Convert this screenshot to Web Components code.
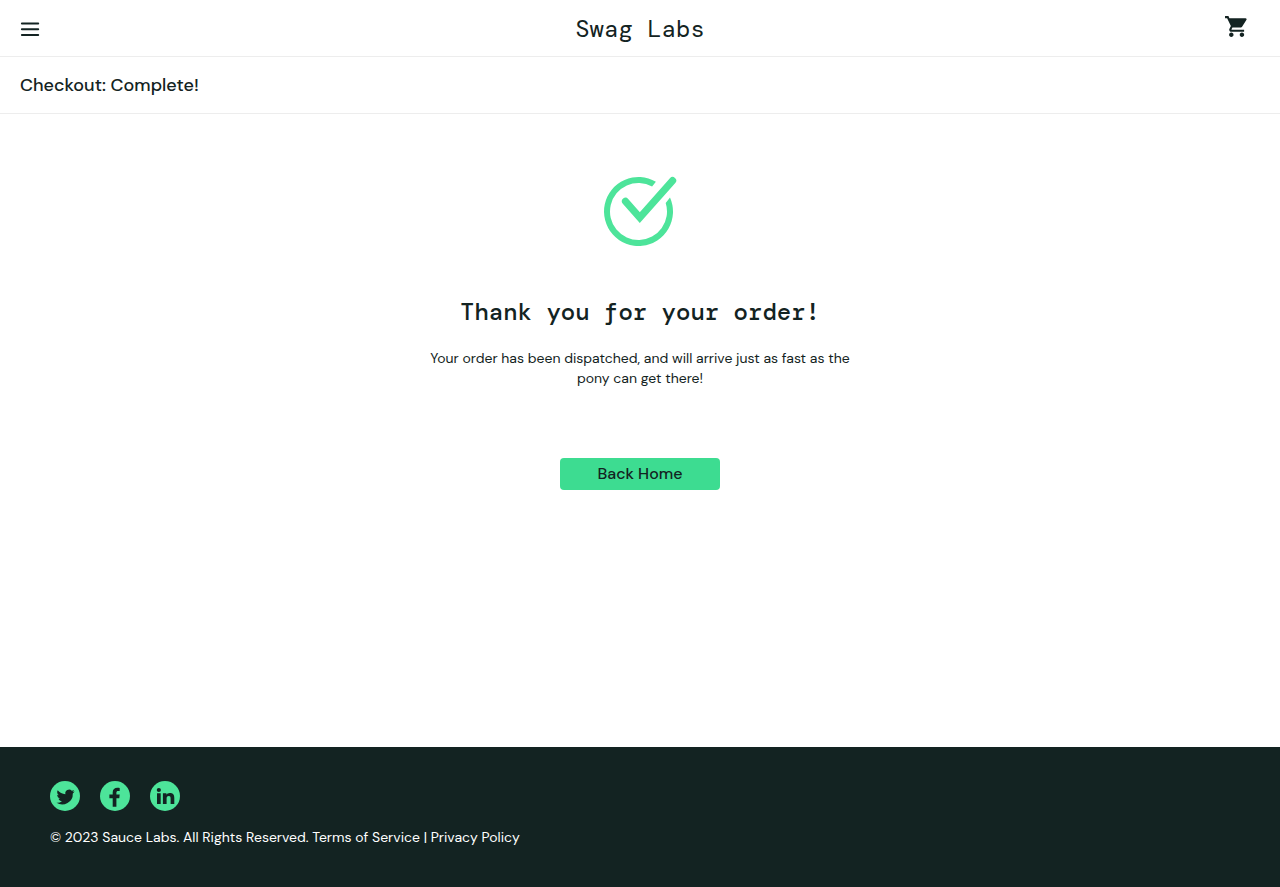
<!DOCTYPE html>
<html lang="en">
<head>
<meta charset="utf-8">
<meta name="viewport" content="width=device-width, initial-scale=1">
<title>Swag Labs</title>
<style>
  body {
    margin: 0;
    background: #fff;
    color: #132322;
    font-family: "DM Sans", Inter, "Liberation Sans", sans-serif;
    --ink: #132322;
    --line: #ededed;
    --accent: #3ddc91;
    --mint: #4de49a;
    --mono: "DM Mono", "Liberation Mono", monospace;
  }
</style>
</head>
<body>
<swag-page>
  <swag-header slot="header">Swag Labs</swag-header>
  <swag-title slot="header">Checkout: Complete!</swag-title>
  <order-complete>
    <span slot="heading">Thank you for your order!</span>
    Your order has been dispatched, and will arrive just as fast as the pony can get there!
    <span slot="action">Back Home</span>
  </order-complete>
  <swag-footer slot="footer">© 2023 Sauce Labs. All Rights Reserved. Terms of Service | Privacy Policy</swag-footer>
</swag-page>

<template id="t-page">
  <style>
    :host { display: flex; flex-direction: column; min-height: 100vh; }
    main { flex: 1; }
  </style>
  <slot name="header"></slot>
  <main><slot></slot></main>
  <slot name="footer"></slot>
</template>

<template id="t-header">
  <style>
    :host {
      display: grid;
      grid-template-columns: 1fr auto 1fr;
      height: 56px;
      padding: 0 20px;
      border-bottom: 1px solid var(--line);
    }
    button, a { display: block; padding: 0; border: 0; background: none; color: inherit; cursor: pointer; }
    svg { display: block; }
    button { justify-self: start; align-self: center; margin-top: 2px; }
    a { justify-self: end; align-self: center; margin: 0 11px 3px 0; }
    div { align-self: center; font: 400 24px/28px var(--mono); padding-top: 2px; }
  </style>
  <button type="button" aria-label="Open Menu">
    <svg width="20" height="16" viewBox="0 0 20 16" fill="none" stroke="currentColor" stroke-width="2" stroke-linecap="round"><path d="M1.900 2.400h16.300M1.900 8.200h16.300M1.900 14h16.300"/></svg>
  </button>
  <div><slot></slot></div>
  <a href="#cart" aria-label="Shopping cart">
    <svg width="25" height="25" viewBox="0 0 24 24" fill="currentColor"><path d="M7 17.700c-1.200 0-2.100.95-2.100 2.150S5.800 22 7 22s2.150-.95 2.150-2.150S8.200 17.700 7 17.700zM1 2v2h2l3.600 7.590-1.350 2.450c-.16.28-.25.61-.25.96 0 1.100.9 2 2 2h12.300v-2H7.420c-.14 0-.25-.11-.25-.25l.03-.12.9-1.630h7.650c.75 0 1.410-.41 1.750-1.030l4.100-6.490A1.003 1.003 0 0 0 20.700 4H5.210l-.94-2H1zm16.200 15.700c-1.200 0-2.100.95-2.100 2.150s.9 2.150 2.100 2.150 2.150-.95 2.150-2.150-.95-2.150-2.150-2.150z"/></svg>
  </a>
</template>

<template id="t-title">
  <style>
    :host { display: flex; align-items: center; height: 56px; padding: 0 20px; border-bottom: 1px solid var(--line); }
    h1 { margin: 0; font-size: 18px; line-height: 24px; font-weight: 500; }
  </style>
  <h1><slot></slot></h1>
</template>

<template id="t-complete">
  <style>
    :host { display: flex; flex-direction: column; align-items: center; padding: 62px 20px; text-align: center; }
    svg { display: block; }
    h2 { margin: 52px 0 0; font: 500 24px/28px var(--mono); }
    p { max-width: 440px; margin: 22px 0 0; font-size: 14px; line-height: 20px; }
    button {
      width: 160px; height: 32px; margin-top: 70px; padding: 0 0 2px;
      border: 0; border-radius: 4px; background: var(--accent); color: inherit;
      font-family: inherit; font-size: 16px; font-weight: 500; cursor: pointer;
    }
  </style>
  <svg width="74" height="70" viewBox="0 0 74 70" role="img" aria-label="Order complete">
    <path fill="#4de49a" d="M52.900 5.700A34.500 34.500 0 1 0 67 21.400L62.700 27A28.500 28.500 0 1 1 49.100 10.450Z"/>
    <path fill="none" stroke="#4de49a" stroke-width="7.200" stroke-linecap="round" d="M22.500 25.300L36.800 41.600L69.600 4.600"/>
  </svg>
  <h2><slot name="heading"></slot></h2>
  <p><slot></slot></p>
  <button type="button"><slot name="action"></slot></button>
</template>

<template id="t-social">
  <style>
    :host { display: block; }
    a { display: block; color: var(--mint); }
    svg { display: block; }
  </style>
  <a><svg width="30" height="30" viewBox="0 0 30 30"><circle cx="15" cy="15" r="15" fill="currentColor"/><path fill="#132322"/></svg></a>
</template>

<template id="t-footer">
  <style>
    :host { display: block; padding: 34px 50px 40px; background: var(--ink); color: #fff; }
    nav { display: flex; gap: 20px; }
    p { margin: 16px 0 0; font-size: 14px; line-height: 20px; }
  </style>
  <nav aria-label="Social">
    <social-link name="Twitter"></social-link>
    <social-link name="Facebook"></social-link>
    <social-link name="LinkedIn"></social-link>
  </nav>
  <p><slot></slot></p>
</template>

<script>
  const glyphs = {
    Twitter: "M24.600 10.300c-.7.3-1.400.5-2.100.6.8-.5 1.300-1.200 1.600-2-.7.4-1.500.7-2.300.9a3.750 3.750 0 0 0-6.400 3.400c-3.100-.2-5.900-1.600-7.700-3.900-1 1.700-.5 3.900 1.200 5-.6 0-1.200-.2-1.700-.5 0 1.800 1.200 3.400 3 3.800-.5.1-1.100.2-1.700.1.500 1.500 1.900 2.500 3.500 2.600a7.500 7.500 0 0 1-5.500 1.500 10.600 10.600 0 0 0 16.300-9.400c.7-.6 1.300-1.300 1.800-2.100z",
    Facebook: "M12.700 25.700V17.200H9.400V13.600h3.300v-2.400c0-3 1.900-4.500 4.700-4.500.9 0 1.700.1 2.300.2v3h-1.500c-1.300 0-1.800.6-1.800 1.700v2h3.300l-.4 3.600h-2.900v8.500z",
    LinkedIn: "M7 12.200h3.700v10.700H7zM8.850 6.900a2.100 2.100 0 1 1 0 4.200 2.100 2.100 0 0 1 0-4.200zM12.900 12.200h3.500v1.500c.6-1.100 1.800-1.800 3.500-1.800 3.600 0 4.400 2.200 4.400 5.200v5.800h-3.700v-5.200c0-1.400-.1-2.700-1.800-2.700-1.800 0-2.200 1.200-2.200 2.600v5.300h-3.700z"
  };

  class Base extends HTMLElement {
    constructor() {
      super();
      this.attachShadow({ mode: "open" })
        .append(document.getElementById(this.constructor.template).content.cloneNode(true));
    }
  }
  class SwagPage extends Base { static template = "t-page"; }
  class SwagHeader extends Base { static template = "t-header"; }
  class SwagTitle extends Base { static template = "t-title"; }
  class OrderComplete extends Base { static template = "t-complete"; }
  class SwagFooter extends Base { static template = "t-footer"; }
  class SocialLink extends Base {
    static template = "t-social";
    connectedCallback() {
      const name = this.getAttribute("name");
      const link = this.shadowRoot.querySelector("a");
      link.href = "#" + name.toLowerCase();
      link.setAttribute("aria-label", name);
      this.shadowRoot.querySelector("path").setAttribute("d", glyphs[name]);
    }
  }
  customElements.define("social-link", SocialLink);
  customElements.define("swag-page", SwagPage);
  customElements.define("swag-header", SwagHeader);
  customElements.define("swag-title", SwagTitle);
  customElements.define("order-complete", OrderComplete);
  customElements.define("swag-footer", SwagFooter);
</script>
</body>
</html>
